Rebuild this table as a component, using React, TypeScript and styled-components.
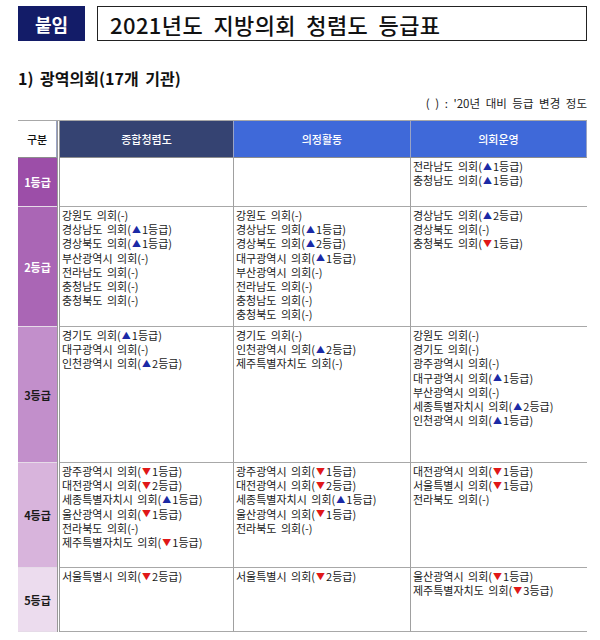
import { Fragment } from "react";
import styled, { createGlobalStyle } from "styled-components";

const GlobalStyle = createGlobalStyle`
  body {
    margin: 0;
    background: #ffffff;
    font-family: "Noto Sans CJK KR", "Noto Sans", sans-serif;
    color: #111;
  }
`;

const Page = styled.div`
  width: 600px;
  height: 640px;
  padding: 6px 13px 0 18px;
  box-sizing: border-box;
  overflow: hidden;
`;

const TitleBar = styled.div`
  display: flex;
  gap: 12px;
  height: 35px;
`;

const Badge = styled.div`
  width: 67px;
  background: #131c68;
  color: #fff;
  font-size: 18px;
  font-weight: 700;
  display: flex;
  align-items: center;
  justify-content: center;
`;

const TitleBox = styled.div`
  flex: 1;
  border: 1px solid #222;
  display: flex;
  align-items: center;
  padding-left: 12px;
  font-size: 22px;
  font-weight: 500;
  letter-spacing: 0.4px;
  word-spacing: 5px;
`;

const Section = styled.div`
  margin-top: 28px;
  height: 18px;
  line-height: 18px;
  font-size: 16px;
  font-weight: 700;
  word-spacing: 3px;
`;

const Note = styled.div`
  margin-top: 9px;
  height: 14px;
  line-height: 14px;
  text-align: right;
  font-size: 11.5px;
  color: #222;
  word-spacing: 3px;
`;

const Grid = styled.div`
  margin-top: 10px;
  display: grid;
  grid-template-columns: 39px 3px 174px 177px 176px;
  grid-template-rows: 37px 49px 120px 136px 105px 64px;
  border-top: 1px solid #a8a8a8;
`;

const Head = styled.div<{ $bg: string; $color?: string }>`
  background: ${(p) => p.$bg};
  color: ${(p) => p.$color ?? "#fff"};
  font-size: 11px;
  font-weight: 500;
  display: flex;
  align-items: center;
  justify-content: center;
  border-right: 1px solid #9aa3c4;
  border-bottom: 1px solid #8d8d8d;
`;

const Gap = styled.div`
  border-left: 1px solid #999;
  border-right: 1px solid #999;
  background: #fff;
`;

const Label = styled.div<{ $bg: string; $color: string }>`
  background: ${(p) => p.$bg};
  color: ${(p) => p.$color};
  font-size: 11px;
  font-weight: 700;
  display: flex;
  align-items: center;
  justify-content: center;
  border-bottom: 1px solid #e6dbe8;
`;

const Cell = styled.div<{ $last?: boolean }>`
  border-right: ${(p) => (p.$last ? "none" : "1px solid #a0a0a0")};
  border-bottom: 1px solid #a8a8a8;
  padding: 1px 0 0 2px;
  font-size: 11px;
  color: #1a1a1a;
  white-space: nowrap;
  overflow: hidden;
`;

const Line = styled.div`
  display: flex;
  align-items: center;
  height: 14.2px;
  line-height: 14px;
  word-spacing: 2px;
`;

const Arrow = styled.span<{ $up: boolean }>`
  display: inline-block;
  line-height: 1;
  font-size: 9px;
  margin: 0 1px;
  color: ${(p) => (p.$up ? "#1b2aa6" : "#e01818")};
`;

type Entry = string;

const renderEntry = (e: Entry, i: number) => {
  // format: "name|u1" (up 1), "name|d2" (down 2), "name|-"
  const [name, change] = e.split("|");
  if (change === "-") {
    return <Line key={i}>{name} 의회(-)</Line>;
  }
  const up = change[0] === "u";
  return (
    <Line key={i}>
      {name} 의회(
      <Arrow $up={up}>{up ? "▲" : "▼"}</Arrow>
      {change.slice(1)}등급)
    </Line>
  );
};

const rows: { label: string; bg: string; color: string; cols: Entry[][] }[] = [
  {
    label: "1등급",
    bg: "#9c4ea8",
    color: "#fff",
    cols: [[], [], ["전라남도|u1", "충청남도|u1"]],
  },
  {
    label: "2등급",
    bg: "#aa66b5",
    color: "#fff",
    cols: [
      ["강원도|-", "경상남도|u1", "경상북도|u1", "부산광역시|-", "전라남도|-", "충청남도|-", "충청북도|-"],
      ["강원도|-", "경상남도|u1", "경상북도|u2", "대구광역시|u1", "부산광역시|-", "전라남도|-", "충청남도|-", "충청북도|-"],
      ["경상남도|u2", "경상북도|-", "충청북도|d1"],
    ],
  },
  {
    label: "3등급",
    bg: "#c28fcb",
    color: "#1a1a1a",
    cols: [
      ["경기도|u1", "대구광역시|-", "인천광역시|u2"],
      ["경기도|-", "인천광역시|u2", "제주특별자치도|-"],
      ["강원도|-", "경기도|-", "광주광역시|-", "대구광역시|u1", "부산광역시|-", "세종특별자치시|u2", "인천광역시|u1"],
    ],
  },
  {
    label: "4등급",
    bg: "#d8b4dc",
    color: "#1a1a1a",
    cols: [
      ["광주광역시|d1", "대전광역시|d2", "세종특별자치시|u1", "울산광역시|d1", "전라북도|-", "제주특별자치도|d1"],
      ["광주광역시|d1", "대전광역시|d2", "세종특별자치시|u1", "울산광역시|d1", "전라북도|-"],
      ["대전광역시|d1", "서울특별시|d1", "전라북도|-"],
    ],
  },
  {
    label: "5등급",
    bg: "#ecdcee",
    color: "#1a1a1a",
    cols: [["서울특별시|d2"], ["서울특별시|d2"], ["울산광역시|d1", "제주특별자치도|d3"]],
  },
];

export default function App() {
  return (
    <>
      <GlobalStyle />
      <Page>
        <TitleBar>
          <Badge>붙임</Badge>
          <TitleBox>2021년도 지방의회 청렴도 등급표</TitleBox>
        </TitleBar>
        <Section>1) 광역의회(17개 기관)</Section>
        <Note>( ) : '20년 대비 등급 변경 정도</Note>
        <Grid>
          <Head $bg="#fff" $color="#111">구분</Head>
          <Gap />
          <Head $bg="#354372">종합청렴도</Head>
          <Head $bg="#3f69d9">의정활동</Head>
          <Head $bg="#3f69d9">의회운영</Head>
          {rows.map((r) => (
            <Fragment key={r.label}>
              <Label $bg={r.bg} $color={r.color}>
                {r.label}
              </Label>
              <Gap />
              {r.cols.map((c, ci) => (
                <Cell key={ci} $last={ci === 2}>
                  {c.map(renderEntry)}
                </Cell>
              ))}
            </Fragment>
          ))}
        </Grid>
      </Page>
    </>
  );
}
